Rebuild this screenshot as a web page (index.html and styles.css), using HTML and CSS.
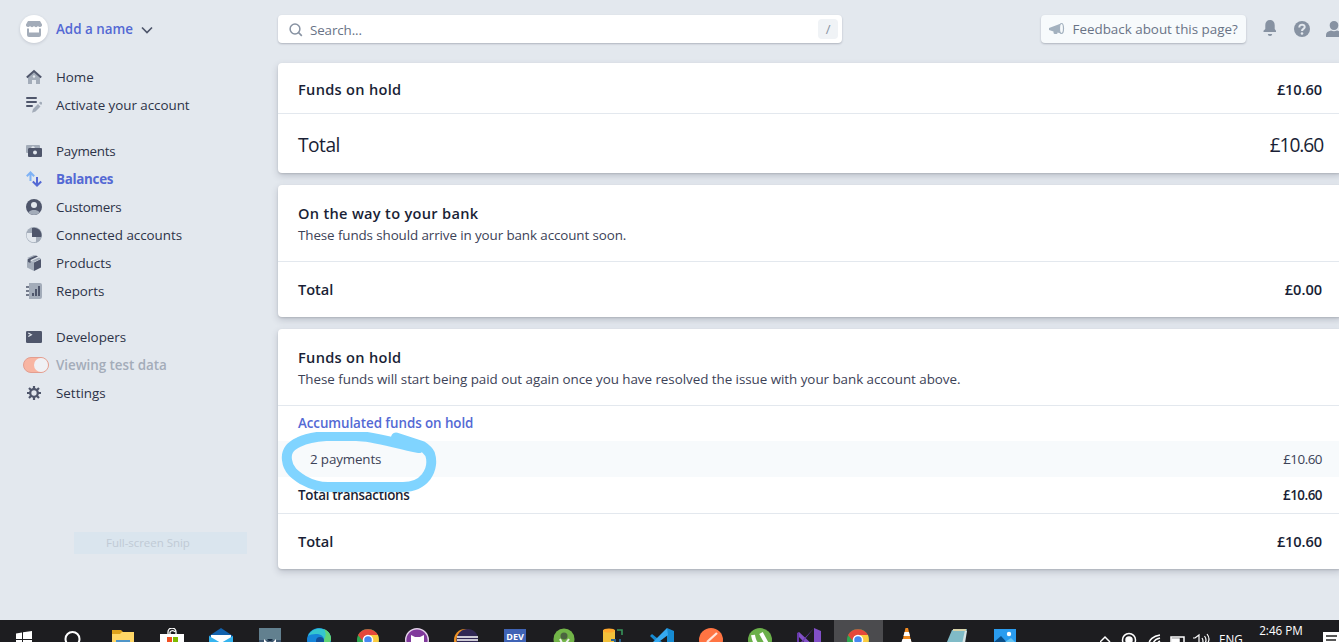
FILE: index.html
```html
<!DOCTYPE html>
<html lang="en">
<head>
<meta charset="utf-8">
<title>Balances</title>
<link rel="stylesheet" href="styles.css">
</head>
<body>
<div class="app">
  <aside class="sidebar">
    <div class="account">
      <span class="avatar"><svg width="16" height="16" viewBox="0 0 16 16"><path fill="#a3acb9" d="M2 0h12l2 3.500a2 2 0 0 1-2 2.500 2 2 0 0 1-2-1 2.300 2.300 0 0 1-4 0 2.300 2.300 0 0 1-4 0 2 2 0 0 1-2 1A2 2 0 0 1 0 3.500zM1 7.500h2v4h10v-4h2V14a2 2 0 0 1-2 2H3a2 2 0 0 1-2-2z"/></svg></span>
      <span class="account-name">Add a name</span>
      <svg class="chevron" width="12" height="8" viewBox="0 0 12 8"><path d="M1 1.500 6 6.500l5-5" fill="none" stroke="#4f566b" stroke-width="1.700"/></svg>
    </div>
    <nav class="group">
      <a class="item"><svg viewBox="0 0 16 16"><path fill="#a3acb9" d="M2 7.500 8 2l6 5.500V15h-4v-4H6v4H2z"/><circle cx="8" cy="7.500" r="1.200" fill="#e3e8ee"/><path fill="none" stroke="#4f566b" stroke-width="2" d="M.8 8.500 8 2l7.200 6.500"/></svg><span>Home</span></a>
      <a class="item"><svg viewBox="0 0 16 16"><path stroke="#4f566b" stroke-width="2" stroke-linecap="round" d="M1 1h9M1 5h9M1 9h5"/><path fill="#a3acb9" d="m6 15.700 1-3.700 5-5 2.500 2.500-5 5zM13 6l1-1a1 1 0 0 1 1.400 0l.6.600a1 1 0 0 1 0 1.400l-1 1z"/></svg><span>Activate your account</span></a>
    </nav>
    <nav class="group">
      <a class="item"><svg viewBox="0 0 16 16"><path fill="#a3acb9" d="M1 2h12a1 1 0 0 1 1 1v2H2v5H1a1 1 0 0 1-1-1V3a1 1 0 0 1 1-1z"/><circle cx="7" cy="5" r="1.800" fill="#e3e8ee"/><rect x="2" y="5" width="14" height="9" rx="1" fill="#4f566b"/><circle cx="9" cy="9.500" r="2" fill="#e3e8ee"/></svg><span class="t-payments">Payments</span></a>
      <a class="item active"><svg viewBox="0 0 16 16"><path fill="none" stroke="#7fb2f5" stroke-width="2" d="M4.500 10V1.500M.8 5.200l3.700-3.700 3.700 3.700"/><path fill="none" stroke="#5469d4" stroke-width="2" d="M11 6v8.500m-4.200-4 4.200 4 4.200-4"/></svg><span>Balances</span></a>
      <a class="item"><svg viewBox="0 0 16 16"><circle cx="8" cy="8" r="8" fill="#4f566b"/><path fill="#a3acb9" d="M2.200 13.500C4 11.500 6 11 8 11s4 .5 5.800 2.500A8 8 0 0 1 2.200 13.500z"/><circle cx="8" cy="6" r="3" fill="#e3e8ee"/></svg><span class="t-customers">Customers</span></a>
      <a class="item"><svg viewBox="0 0 16 16"><circle cx="8" cy="8" r="8" fill="#a3acb9"/><path fill="#4f566b" d="M6 1v9h9.300A7.500 7.500 0 0 0 6 1z"/><path fill="#a3acb9" d="M10 10h5.500a8 8 0 0 1-5.500 5.700z"/><path fill="#e3e8ee" d="M1 6h5v4h4v4.800A7 7 0 0 1 1 6z"/></svg><span>Connected accounts</span></a>
      <a class="item"><svg viewBox="0 0 16 16"><path fill="#a3acb9" d="m1 4 7 3v9l-7-3.500zM1 3l7-3 2 .9L3.500 4z"/><path fill="#4f566b" d="m8 7.500 7-3.500v8.500L8 16zM2 4l8-3.500 2 1L4.500 5v3L2 7z"/><path fill="#a3acb9" d="m6 5.500 7-3 2 1-7 3.500z"/></svg><span>Products</span></a>
      <a class="item"><svg viewBox="0 0 16 16"><path fill="#a3acb9" d="M3 0h11a2 2 0 0 1 2 2v12a2 2 0 0 1-2 2H3z"/><path stroke="#4f566b" stroke-width="1.500" d="M0 4h3M0 8h3M0 12h3"/><path stroke="#4f566b" stroke-width="2" d="M7 13v-3M10 13V6M13 13V3"/></svg><span>Reports</span></a>
    </nav>
    <nav class="group">
      <a class="item"><svg viewBox="0 0 16 16"><rect y="2" width="16" height="12" rx="1.300" fill="#4f566b"/><path d="m2.300 4 3 1.700-3 1.700" fill="none" stroke="#e3e8ee" stroke-width="1.200"/></svg><span>Developers</span></a>
      <a class="item test"><i class="toggle"></i><span>Viewing test data</span></a>
      <a class="item"><svg viewBox="0 0 16 16"><circle cx="8" cy="8" r="3.800" fill="none" stroke="#4f566b" stroke-width="2.300"/><path stroke="#4f566b" stroke-width="2.200" d="M8 1v3M8 12v3M1 8h3M12 8h3M3 3l2 2M11 11l2 2M3 13l2-2M11 5l2-2"/></svg><span class="t-settings">Settings</span></a>
    </nav>
    <div class="snip">Full-screen Snip</div>
  </aside>
  <div class="main">
    <header class="topbar">
      <div class="search">
        <svg width="14" height="14" viewBox="0 0 14 14"><circle cx="6" cy="6" r="4.900" fill="none" stroke="#8792a2" stroke-width="1.500"/><path d="m9.500 9.500 3.300 3.300" stroke="#8792a2" stroke-width="1.700"/></svg>
        <span>Search...</span><kbd>/</kbd>
      </div>
      <div class="feedback"><svg width="16" height="14" viewBox="0 0 16 14"><path fill="#a3b1bf" d="M0 6 12 1.500v10L8.500 10.500V11a1 1 0 0 1-1 1H6a1.500 1.500 0 0 1-1.500-1.500v-1L0 8z"/><ellipse cx="12.500" cy="6.500" rx="2" ry="5" fill="#f7fafc" stroke="#a3b1bf" stroke-width="1.200"/></svg><span>Feedback about this page?</span></div>
      <svg class="bell" width="14" height="16" viewBox="0 0 14 16"><path fill="#8792a2" d="M7 0c3 0 4.700 2 4.700 5v4l1.300 1.800V12H.5v-1.200L2.300 9V5C2.300 2 4 0 7 0zM4.800 14h4.400A2.200 2 0 0 1 4.800 14z"/></svg>
      <svg class="help" width="16" height="16" viewBox="0 0 16 16"><circle cx="8" cy="8" r="8" fill="#8792a2"/><path fill="none" stroke="#e3e8ee" stroke-width="2" d="M5.300 6.500C5.300 2.500 11 3 10.700 6.200 10.500 8 8 7.800 8 10"/><circle cx="8" cy="12.500" r="1.300" fill="#e3e8ee"/></svg>
      <svg class="person" width="16" height="16" viewBox="0 0 16 16"><path fill="#8792a2" d="M8 0a4.300 4.300 0 0 1 4.300 4.500C12.300 7 10.500 9 8 9S3.700 7 3.700 4.500A4.300 4.300 0 0 1 8 0zM5 9.500q3 1.500 6 0c3 .8 5 2 5 4.500v2H0v-2c0-2.500 2-3.700 5-4.500z"/></svg>
    </header>
    <section class="card">
      <div class="row head"><b class="title">Funds on hold</b><b class="amount">£10.60</b></div>
      <div class="row grand"><span>Total</span><span class="grand-amount">£10.60</span></div>
    </section>
    <section class="card">
      <div class="intro"><b class="title">On the way to your bank</b><p class="soon">These funds should arrive in your bank account soon.</p></div>
      <div class="row total"><b>Total</b><b>£0.00</b></div>
    </section>
    <section class="card">
      <div class="intro"><b class="title">Funds on hold</b><p>These funds will start being paid out again once you have resolved the issue with your bank account above.</p></div>
      <div class="row line link first"><span>Accumulated funds on hold</span></div>
      <div class="row line payments"><span>2 payments</span><span class="small-amount">£10.60</span>
        <svg class="scribble" width="170" height="68" viewBox="0 0 170 68"><path d="M118 5.500 144 14 141 16C115 11 95 4 78 4H48C35 5 27 7 21 10 10 15 8 21 9 28c1 10 8 15 16 20 9 5 15 7 25 7h75c12 0 19-5 23-10 6-8 6-17 4-23-2-4-5-6-8-8" fill="none" stroke="#80d4ff" stroke-width="10" stroke-linecap="round" stroke-linejoin="round"/></svg>
      </div>
      <div class="row line sum"><span>Total transactions</span><span class="small-amount">£10.60</span></div>
      <div class="row total"><b>Total</b><b class="amount">£10.60</b></div>
    </section>
  </div>
</div>
<footer class="taskbar">
  <div class="apps">
    <i><svg viewBox="0 0 24 24"><path fill="#fff" d="m3 5.500 6-1V11H3zm7-1.200L19 3v8h-9zM3 12h6v7H3zm7 0h9v8h-9z"/></svg></i>
    <i><svg viewBox="0 0 24 24"><circle cx="10.500" cy="11" r="7" fill="none" stroke="#fff" stroke-width="2"/></svg></i>
    <i><svg viewBox="0 0 24 24"><path fill="#dda21c" d="M1 2h9l2 2h11v6H1z"/><path fill="#ffd766" d="M1 6h8l2-2h12v18H1z"/><path fill="#4f95c8" d="M5 12h14v8H5z"/></svg></i>
    <i><svg viewBox="0 0 24 24"><path fill="none" stroke="#fff" stroke-width="1.300" d="M8 6V4a4 4 0 0 1 8 0v2M10 6V4a3 3 0 0 1 5 0"/><path fill="#fff" d="M0 6h24v18H0z"/><path fill="#f25022" d="M7 9h5v5H7z"/><path fill="#7fba00" d="M13 9h5v5h-5z"/></svg></i>
    <i><svg viewBox="0 0 24 24"><path fill="#1262ad" d="m0 8 12-8 12 8v10H0z"/><path fill="#fff" d="M2 7h20v7H2z"/><path fill="#35b4ef" d="m0 8 12 7 12-7v15H0z"/></svg></i>
    <i><svg viewBox="0 0 24 24"><path fill="#62808f" d="M1 0h22v23H1z"/><path fill="#3f5972" d="M1 12h22v6H1z"/><path fill="#fff" d="m6 11 4 4 2-2 2 2 4-4v8H6z"/><path fill="#162b42" d="m9 11 3 3 3-3z"/></svg></i>
    <i><svg viewBox="0 0 24 24"><circle cx="12" cy="12" r="12" fill="#1685d9"/><path fill="#35c6d0" d="M1 8C6-4 25-1 24 12c-1 4-7 3-7 0 0-7-11-7-16-4z"/><path fill="#62d477" d="M17 1c7 3 9 11 5 14-4 1-6-1-5-3 1-3 3-6 0-11z"/><circle cx="13" cy="13" r="4" fill="#124e98"/></svg></i>
    <i><svg viewBox="0 0 24 24"><circle cx="12" cy="12" r="11" fill="#30a852"/><path fill="#e5483b" d="M2 7a11.500 11.500 0 0 1 20 0l-9 1-7 4z"/><path fill="#fccc3f" d="M22 7c3 8-2 15-9 16l4-12-4-4z"/><circle cx="12" cy="12" r="4.500" fill="#4688f1" stroke="#fff" stroke-width="1.500"/></svg></i>
    <i><svg viewBox="0 0 24 24"><circle cx="12" cy="12" r="11.300" fill="#813a9c" stroke="#e2d0e9" stroke-width="1.400"/><path fill="#fff" d="m6 7 4 2h5l4-2v8l-3 3H9l-3-3z"/></svg></i>
    <i><svg viewBox="0 0 24 24"><circle cx="11" cy="12" r="11" fill="#ef9222"/><circle cx="13.500" cy="12" r="11" fill="#302753"/><path stroke="#fff" stroke-width="1.300" d="M3 9h21M3 12h21"/></svg></i>
    <i><svg viewBox="0 0 24 24"><path fill="#3f63b5" d="M1 1h22v24H1z"/><text x="12" y="11.500" text-anchor="middle" class="dev">DEV</text></svg></i>
    <i><svg viewBox="0 0 24 24"><circle cx="12" cy="11" r="10.500" fill="#72b448"/><circle cx="12" cy="8" r="3.500" fill="#4c6540"/><path stroke="#eee" stroke-width="2" d="m8 11 2 4m7-4-3 4"/></svg></i>
    <i><svg viewBox="0 0 24 24"><path fill="#f3c13b" d="M2 2h12v20H2z"/><ellipse cx="8" cy="2.500" rx="6" ry="2" fill="#ffa82d"/><path fill="none" stroke="#37945b" stroke-width="1.600" d="M16 2h5v5"/><path stroke="#28618c" stroke-width="2" d="M10 12h4v3h5v-4" fill="none"/></svg></i>
    <i><svg viewBox="0 0 24 24"><path fill="#168bd2" d="m17 0 7 3v18l-7 3L0 8l2-2 15 12z"/><path fill="#35aaf2" d="M17 0 0 17l2 2L18 7z"/></svg></i>
    <i><svg viewBox="0 0 24 24"><circle cx="12" cy="12" r="12" fill="#ff7442"/><path stroke="#ffe5db" stroke-width="2.300" d="M8 14 18 5"/></svg></i>
    <i><svg viewBox="0 0 24 24"><circle cx="12" cy="12" r="12" fill="#6bb04a"/><path fill="none" stroke="#fff" stroke-width="4" d="M5 7c2 12 7 10 8 8m0-10 6 11"/></svg></i>
    <i><svg viewBox="0 0 24 24"><path fill="#8250c8" d="m17 0 7 3v18l-7 3L0 7l2-3 15 14z"/><path fill="#6739aa" d="M17 0 4 16l-4 2V5l2-1v12L17 0z"/></svg></i>
    <i class="current"><svg viewBox="0 0 24 24"><circle cx="12" cy="12" r="11" fill="#30a852"/><path fill="#e5483b" d="M2 7a11.500 11.500 0 0 1 20 0l-9 1-7 4z"/><path fill="#fccc3f" d="M22 7c3 8-2 15-9 16l4-12-4-4z"/><circle cx="12" cy="12" r="4.500" fill="#4688f1" stroke="#fff" stroke-width="1.500"/></svg></i>
    <i><svg viewBox="0 0 24 24"><path fill="#f28b20" d="M10.500 0h2.500l5 21H5.500z"/><path fill="#fff" d="M9.500 4h4.500l1 4H8.500zM7.500 11h8.200l.8 3h-10z"/></svg></i>
    <i><svg viewBox="0 0 24 24"><path fill="#80bbc7" d="m8 2 15-1-5 20H0z"/><path fill="#d6e4e5" d="m21 2 2 1-3 18h-3z"/><path stroke="#d7d3a9" stroke-width="2" d="M9 2h13"/></svg></i>
    <i><svg viewBox="0 0 24 24"><path fill="#2a9cef" d="M1 1h22v22H1z"/><circle cx="16" cy="6" r="2.200" fill="#fff"/><path fill="#0b4f88" d="m1 14 7-6 11 12H1z"/><path fill="#64c5f4" d="m12 14 6-4 5 5v8z"/></svg></i>
  </div>
  <div class="tray">
    <svg width="138" height="24" viewBox="0 0 138 24" fill="none" stroke="#fff" stroke-width="1.500"><path d="m0 22 5-5 5 5"/><circle cx="29" cy="20" r="6.500"/><circle cx="29" cy="20" r="3" fill="#fff"/><path d="M49 24c0-4 4-8 11-9M53 25c0-4 3-6 7-7M57 25c0-2 1-3 3-4"/><path d="M71 17h13v8H71z"/><path d="M72 19h7v8h-7z" fill="#fff"/><path d="M93 18h2l4-3v9M102 18q2 3 0 6M104.500 16q3 4 0 8M107 14q4 5 0 10" stroke-width="1.200"/></svg>
    <span class="lang">ENG</span><span class="clock">2:46 PM</span>
    <svg class="note" width="16" height="16" viewBox="0 0 16 16"><path fill="#fff" d="M0 0h16v14H0z"/><path stroke="#222" stroke-width="1.500" d="M3 4h11M3 8h10"/></svg>
  </div>
</footer>
</body>
</html>
```
FILE: styles.css
```css
* { box-sizing: border-box; }
body { margin: 0; width: 1339px; height: 642px; overflow: hidden; background: #e3e8ee; color: #3c4257; font: 13.4px/20px "Open Sans", "Noto Sans", sans-serif; letter-spacing: -0.04px; }
.app { display: flex; height: 620px; overflow: hidden; }
.sidebar { flex: 0 0 278px; padding: 15px 0 0 20px; position: relative; }
.account { display: flex; align-items: center; height: 28px; margin-bottom: 20px; color: #5469d4; font-weight: 600; letter-spacing: 0; }
.avatar { display: grid; place-items: center; width: 28px; height: 28px; margin-right: 8px; border-radius: 50%; background: #fff; box-shadow: 0 1px 3px #3c425730; }
.chevron { margin: 2px 0 0 8px; }
.group { display: grid; margin-bottom: 18px; padding-left: 6px; }
.item { display: flex; align-items: center; height: 28px; gap: 14px; color: #2d3348; white-space: nowrap; }
.item svg { width: 16px; height: 16px; }
.item.active { color: #5469d4; font-weight: 700; letter-spacing: -0.3px; }
.t-payments, .t-customers { letter-spacing: -0.25px; }
.t-settings { letter-spacing: 0; }
.item.test { color: #a3acb9; font-weight: 600; gap: 7px; margin-left: -3px; }
.toggle { display: flex; justify-content: flex-end; width: 26px; height: 16px; border: 1px solid #e39e90; border-radius: 8px; background: #f8b5a2; }
.toggle::after { content: ""; width: 14px; height: 14px; border-radius: 50%; background: #f0f1f5; }
.snip { position: absolute; left: 74px; top: 532px; width: 173px; height: 22px; padding-left: 32px; background: #dae5ee; color: #c0cad5; font-size: 11.5px; line-height: 22px; }
.main { flex: 0 0 1064px; }
.topbar { display: flex; height: 63px; padding-top: 15px; align-items: flex-start; }
.search, .feedback { display: flex; align-items: center; height: 28px; border-radius: 4px; background: #fff; box-shadow: 0 1px 2px #3c425750; }
.search { width: 564px; padding: 2px 4px 0 11px; gap: 7px; color: #697386; letter-spacing: -0.12px; }
kbd { width: 20px; height: 20px; margin: -2px 0 0 auto; border-radius: 4px; background: #f0f3f6; color: #8792a2; font: 13px/20px "Open Sans", sans-serif; text-align: center; }
.feedback { width: 205px; margin-left: 199px; padding-left: 8px; gap: 7.5px; background: #f7fafc; color: #697386; white-space: nowrap; letter-spacing: 0; }
.bell { margin: 5px 0 0 17px; }
.help { margin: 6px 0 0 17px; }
.person { margin: 6px 0 0 16px; }
.card { margin-bottom: 12px; border-radius: 4px; background: #fff; box-shadow: 0 3px 7px #3c425738, 0 1px 2px #00000020; color: #1a1f36; }
.row { display: flex; align-items: center; justify-content: space-between; padding: 0 20px; white-space: nowrap; }
b { font-size: 14.6px; font-weight: 600; }
.title { letter-spacing: 0.3px; }
.amount { letter-spacing: -0.1px; }
.head { height: 50px; padding-top: 1px; }
.grand { height: 60px; border-top: 1px solid #e3e8ee; font-size: 19.2px; font-weight: 400; letter-spacing: -0.5px; padding-top: 2px; }
.grand-amount { letter-spacing: -1.1px; margin-right: -1px; }
.intro { height: 76px; padding: 17px 20px 0; }
.intro b { display: block; width: max-content; line-height: 22px; }
.intro p { margin: 1px 0 0; width: max-content; line-height: 21px; color: #3c4257; }
.intro .soon { letter-spacing: -0.1px; }
.total { height: 56px; padding-bottom: 2px; border-top: 1px solid #e3e8ee; }
.line { height: 36px; }
.first { border-top: 1px solid #e3e8ee; padding-bottom: 1px; letter-spacing: -0.08px; }
.link { color: #5469d4; font-weight: 600; }
.payments { position: relative; padding-left: 32px; background: #f7fafc; color: #3c4257; letter-spacing: -0.15px; }
.small-amount { letter-spacing: -0.5px; }
.scribble { position: absolute; left: 0; top: -9px; z-index: 1; }
.sum { font-weight: 600; letter-spacing: -0.28px; }
.taskbar { display: flex; height: 22px; overflow: hidden; background: #1d1d20; position: relative; }
.apps { display: flex; width: 1030px; }
.apps i { flex: none; width: 49.05px; height: 40px; padding: 8px 0 0 12.5px; }
.apps svg { display: block; width: 24px; height: 24px; }
.apps .current { background: #4b4b4e; }
.dev { font: 700 9px "Open Sans", sans-serif; fill: #fff; }
.tray { display: flex; width: 309px; padding-left: 70px; color: #fff; font-size: 11.7px; }
.tray > svg { flex: none; }
.lang { margin: 9px 0 0 -19px; width: 41px; height: 13px; line-height: 20px; }
.clock { width: 64px; white-space: nowrap; }
.tray .note { margin-top: 12px; margin-left: 1px; }
```
